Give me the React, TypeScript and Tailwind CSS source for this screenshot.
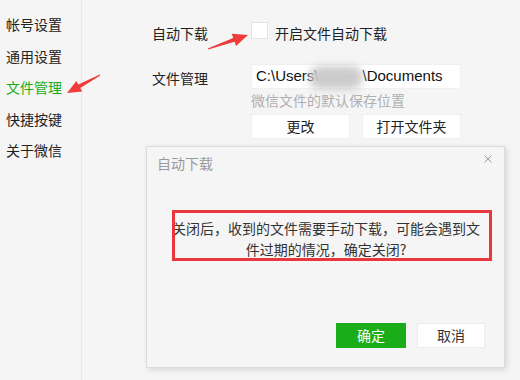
import React from "react";

const cjk = "font-['Noto_Sans_CJK_SC',sans-serif]";

export default function App() {
  const navItems = ["帐号设置", "通用设置", "文件管理", "快捷按键", "关于微信"];
  const active = "文件管理";

  return (
    <div className={`relative w-[520px] h-[380px] overflow-hidden bg-[#f5f5f5] text-[#333] ${cjk} flex`}>
      {/* Sidebar */}
      <aside className="w-[82px] shrink-0 border-r border-[#e8e8e8] pt-[9px]">
        {navItems.map((item) => (
          <div
            key={item}
            className={`h-[31.5px] leading-[31.5px] pl-[6px] text-[14px] ${
              item === active ? "text-[#1aad19]" : "text-[#222]"
            }`}
          >
            {item}
          </div>
        ))}
      </aside>

      {/* Settings panel */}
      <main className="flex-1 pl-[70px] pt-[22px] text-[14px]">
        <div className="flex items-start h-[22px]">
          <span className="w-[99px] leading-[22px] text-[#222]">自动下载</span>
          <span className="w-[17px] h-[17px] bg-white border border-[#e4e4e4]"></span>
          <span className="ml-[7px] leading-[22px] text-[#222]">开启文件自动下载</span>
        </div>

        <div className="flex items-center mt-[20px]">
          <span className="w-[99px] pt-[3px] text-[#222]">文件管理</span>
          <div className="relative w-[210px] h-[25px] bg-white border border-[#f0f0f0] pl-[4px] flex items-center font-['Liberation_Sans',sans-serif] text-[15px] text-[#111]">
            <span>C:\Users\</span>
            <span className="inline-block w-[44px]"></span>
            <span>\Documents</span>
            <span className="absolute left-[57px] top-[1px] w-[54px] h-[23px] rounded-full bg-[#cbcbcb] blur-[4px]"></span>
          </div>
        </div>
        <div className="ml-[99px] mt-[1px] leading-[20px] text-[#b0b0b0]">微信文件的默认保存位置</div>
        <div className="ml-[99px] mt-[4px] flex gap-[12px]">
          <button className="w-[99px] h-[25px] bg-white border border-[#f0f0f0] text-[14px] text-[#222]">更改</button>
          <button className="w-[99px] h-[25px] bg-white border border-[#f0f0f0] text-[14px] text-[#222]">打开文件夹</button>
        </div>
      </main>

      {/* Confirm dialog */}
      <div className="absolute left-[146px] top-[146px] w-[359px] h-[222px] bg-[#f5f5f5] border border-[#dcdcdc] shadow-[2px_2px_6px_rgba(0,0,0,0.12)] flex flex-col">
        <div className="relative h-[32px] pl-[10px] leading-[32px] text-[14px] text-[#999]">
          自动下载
          <svg className="absolute right-[12px] top-[8px]" width="8" height="8" viewBox="0 0 8 8">
            <path d="M0.5 0.5 L7.5 7.5 M7.5 0.5 L0.5 7.5" stroke="#9a9a9a" strokeWidth="1" />
          </svg>
        </div>
        <div className="relative">
          <p className="ml-[24px] mt-[39px] w-[310px] whitespace-nowrap text-center text-[14px] leading-[21px] text-[#333]">
            关闭后，收到的文件需要手动下载，可能会遇到文
            <br />
            件过期的情况，确定关闭?
          </p>
          <div className="absolute left-[25px] top-[31px] w-[320px] h-[51px] border-[3px] border-[#e8383d]"></div>
        </div>
        <div className="mt-auto mb-[19px] mr-[19px] flex justify-end gap-[11px]">
          <button className="w-[70px] h-[25px] bg-[#1aad19] text-white text-[14px]">确定</button>
          <button className="w-[68px] h-[25px] bg-white border border-[#ececec] text-[14px] text-[#333]">取消</button>
        </div>
      </div>

      {/* Annotation arrows */}
      <svg className="absolute inset-0 pointer-events-none" width="520" height="380" viewBox="0 0 520 380">
        <polygon
          points="99.8,74.6 78.3,84.5 76.4,81 67,93 82.2,91.6 80.3,88.1 100.2,75.4"
          fill="#ef3b3b"
        />
        <polygon
          points="207.8,48.4 233.2,38.1 231.8,33.8 248,35 236,46.1 234.6,41.8 208.2,49.6"
          fill="#ef3b3b"
        />
      </svg>
    </div>
  );
}
